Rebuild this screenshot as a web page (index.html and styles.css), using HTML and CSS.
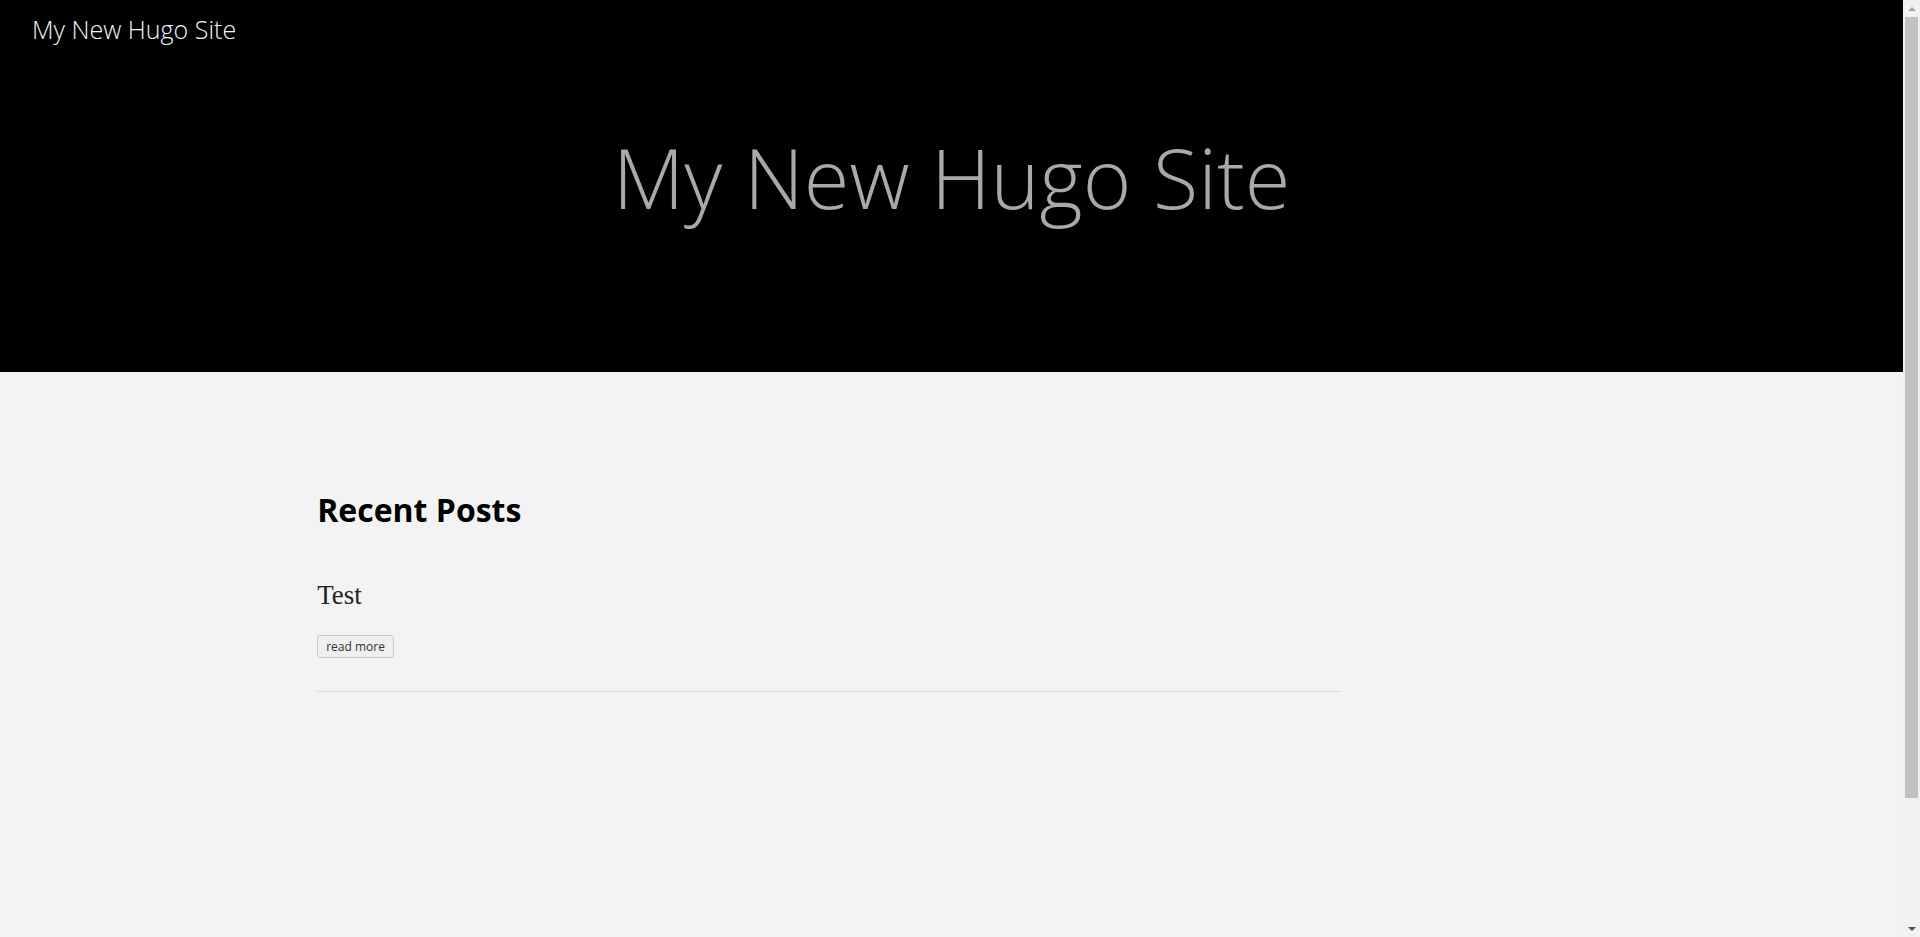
FILE: index.html
```html
<!DOCTYPE html>
<html lang="en">
<head>
<meta charset="utf-8">
<title>My New Hugo Site</title>
<link rel="stylesheet" href="styles.css">
</head>
<body>
<div class="page">
  <header class="site-header">
    <nav class="nav">
      <a class="nav-brand" href="#">My New Hugo Site</a>
    </nav>
    <div class="hero">
      <h1 class="hero-title">My New Hugo Site</h1>
    </div>
  </header>
  <main class="content">
    <section class="posts">
      <h2 class="posts-heading">Recent Posts</h2>
      <article class="post">
        <h3 class="post-title">Test</h3>
        <button class="read-more" type="button">read more</button>
      </article>
    </section>
  </main>
</div>
<div class="scrollbar" aria-hidden="true">
  <div class="sb-arrow sb-up"></div>
  <div class="sb-track"><div class="sb-thumb"></div></div>
  <div class="sb-arrow sb-down"></div>
</div>
</body>
</html>
```
FILE: styles.css
```css
html, body {
  height: 100%;
}
body {
  margin: 0;
  display: flex;
  overflow: hidden;
  background: #f3f3f3;
  font-family: "Open Sans", "Segoe UI", sans-serif;
  color: #000;
}
.page {
  flex: 1;
  min-width: 0;
  overflow: hidden;
}
.site-header {
  background: #000;
  height: 372px;
  display: flex;
  flex-direction: column;
}
.nav {
  padding: 12px 32px 0;
}
.nav-brand {
  color: #eef4fb;
  text-decoration: none;
  font-weight: 300;
  font-size: 25px;
  line-height: 34px;
}
.hero {
  display: flex;
  justify-content: center;
  padding-top: 76px;
}
.hero-title {
  margin: 0;
  font-weight: 300;
  font-size: 83px;
  line-height: 110px;
  color: #a9a9a9;
}
.content {
  padding-top: 116px;
}
.posts {
  margin-left: calc(100% / 6);
  width: 1024px;
  border-bottom: 1px solid #d6d6d6;
  padding-bottom: 33px;
}
.posts-heading {
  margin: 0;
  font-size: 32px;
  font-weight: 700;
  line-height: 44px;
}
.post-title {
  margin: 47px 0 0;
  font-family: "Liberation Serif", "Times New Roman", serif;
  font-weight: 400;
  font-size: 27px;
  line-height: 32px;
  color: #222;
}
.read-more {
  margin-top: 24px;
  font-family: "Open Sans", sans-serif;
  font-size: 12px;
  line-height: 15px;
  padding: 3px 8px;
  color: #333;
  background: #efefef;
  border: 1px solid #c9c9c9;
  border-radius: 3px;
}
.scrollbar {
  width: 17px;
  flex: none;
  background: #f1f1f1;
  display: flex;
  flex-direction: column;
}
.sb-arrow {
  height: 17px;
  flex: none;
  display: flex;
  align-items: center;
  justify-content: center;
}
.sb-arrow::before {
  content: "";
  width: 0;
  height: 0;
  border-left: 4px solid transparent;
  border-right: 4px solid transparent;
}
.sb-up::before {
  border-bottom: 4px solid #a3a3a3;
}
.sb-down::before {
  border-top: 4px solid #505050;
}
.sb-track {
  flex: 1;
}
.sb-thumb {
  margin: 0 2px;
  height: 781px;
  background: #c1c1c1;
}
```
